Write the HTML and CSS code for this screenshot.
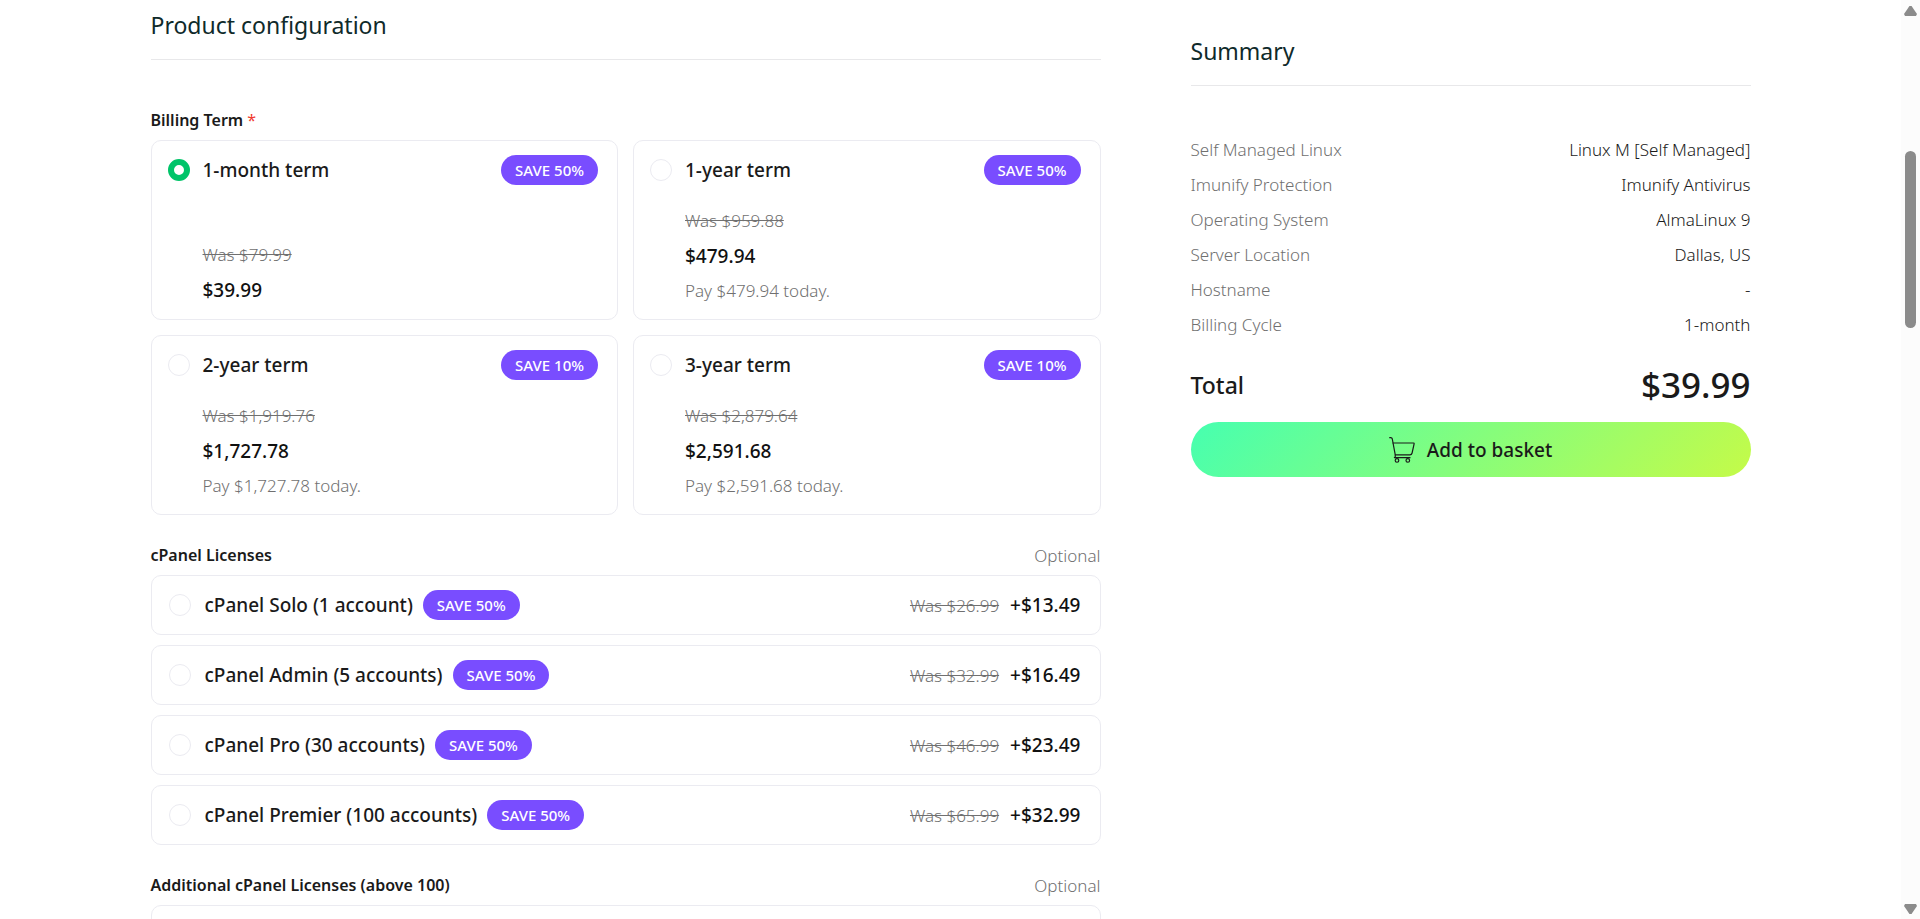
FILE: index.html
```html
<!DOCTYPE html>
<html lang="en">
<head>
  <meta charset="UTF-8" />
  <meta name="viewport" content="width=device-width, initial-scale=1" />
  <title>Product configuration</title>
  <link rel="stylesheet" href="styles.css">
</head>
<body>
  <div class="viewport">
    <main class="page">
      <section class="config">
        <h2 class="section-title">Product configuration</h2>

        <div class="group-head">
          <h3 id="billing-label">Billing Term <span class="required">*</span></h3>
        </div>
        <div class="terms" role="radiogroup" aria-labelledby="billing-label">
          <label class="term">
            <span class="term-head">
              <input type="radio" class="radio" name="term" value="1m" checked>
              <span class="option-name">1-month term</span>
              <span class="badge">SAVE 50%</span>
            </span>
            <span class="term-prices">
              <s class="was">Was $79.99</s>
              <span class="price">$39.99</span>
            </span>
          </label>
          <label class="term">
            <span class="term-head">
              <input type="radio" class="radio" name="term" value="1y">
              <span class="option-name">1-year term</span>
              <span class="badge">SAVE 50%</span>
            </span>
            <span class="term-prices">
              <s class="was">Was $959.88</s>
              <span class="price">$479.94</span>
              <span class="today">Pay $479.94 today.</span>
            </span>
          </label>
          <label class="term">
            <span class="term-head">
              <input type="radio" class="radio" name="term" value="2y">
              <span class="option-name">2-year term</span>
              <span class="badge">SAVE 10%</span>
            </span>
            <span class="term-prices">
              <s class="was">Was $1,919.76</s>
              <span class="price">$1,727.78</span>
              <span class="today">Pay $1,727.78 today.</span>
            </span>
          </label>
          <label class="term">
            <span class="term-head">
              <input type="radio" class="radio" name="term" value="3y">
              <span class="option-name">3-year term</span>
              <span class="badge">SAVE 10%</span>
            </span>
            <span class="term-prices">
              <s class="was">Was $2,879.64</s>
              <span class="price">$2,591.68</span>
              <span class="today">Pay $2,591.68 today.</span>
            </span>
          </label>
        </div>

        <div class="group-head">
          <h3 id="cpanel-label">cPanel Licenses</h3>
          <span class="optional">Optional</span>
        </div>
        <div class="licenses" role="radiogroup" aria-labelledby="cpanel-label">
          <label class="license">
            <input type="radio" class="radio" name="cpanel" value="solo">
            <span class="option-name">cPanel Solo (1 account)</span>
            <span class="badge">SAVE 50%</span>
            <s class="was">Was $26.99</s>
            <span class="price">+$13.49</span>
          </label>
          <label class="license">
            <input type="radio" class="radio" name="cpanel" value="admin">
            <span class="option-name">cPanel Admin (5 accounts)</span>
            <span class="badge">SAVE 50%</span>
            <s class="was">Was $32.99</s>
            <span class="price">+$16.49</span>
          </label>
          <label class="license">
            <input type="radio" class="radio" name="cpanel" value="pro">
            <span class="option-name">cPanel Pro (30 accounts)</span>
            <span class="badge">SAVE 50%</span>
            <s class="was">Was $46.99</s>
            <span class="price">+$23.49</span>
          </label>
          <label class="license">
            <input type="radio" class="radio" name="cpanel" value="premier">
            <span class="option-name">cPanel Premier (100 accounts)</span>
            <span class="badge">SAVE 50%</span>
            <s class="was">Was $65.99</s>
            <span class="price">+$32.99</span>
          </label>
        </div>

        <div class="group-head">
          <h3 id="additional-label">Additional cPanel Licenses (above 100)</h3>
          <span class="optional">Optional</span>
        </div>
        <div class="license"></div>
      </section>

      <aside class="summary">
        <h2 class="section-title">Summary</h2>
        <dl class="summary-list">
          <div class="summary-row"><dt>Self Managed Linux</dt><dd>Linux M [Self Managed]</dd></div>
          <div class="summary-row"><dt>Imunify Protection</dt><dd>Imunify Antivirus</dd></div>
          <div class="summary-row"><dt>Operating System</dt><dd>AlmaLinux 9</dd></div>
          <div class="summary-row"><dt>Server Location</dt><dd>Dallas, US</dd></div>
          <div class="summary-row"><dt>Hostname</dt><dd>-</dd></div>
          <div class="summary-row"><dt>Billing Cycle</dt><dd>1-month</dd></div>
        </dl>
        <div class="total">
          <span class="total-label">Total</span>
          <span class="total-price">$39.99</span>
        </div>
        <button type="button" class="basket">
          <svg class="cart" viewBox="0 0 26 26" fill="none" stroke="currentColor" stroke-width="1.2" stroke-linecap="round" stroke-linejoin="round" aria-hidden="true">
            <path d="M.7.7H1.800c.8 0 1.300.4 1.500 1.300L6.300 18.200c.2 1.200-.2 2.300-.9 2.500H21" />
            <path d="M4.100 6H24.500c.5 0 .7.300.6.800l-2 9.200c-.3 1.300-.9 1.900-2.200 1.900H6.300" />
            <circle cx="8" cy="23.400" r="1.800" />
            <circle cx="18.800" cy="23.400" r="1.800" />
          </svg>
          Add to basket
        </button>
      </aside>
    </main>

    <div class="scrollbar" aria-hidden="true">
      <span class="arrow arrow-up"></span>
      <span class="track"><span class="thumb"></span></span>
      <span class="arrow arrow-down"></span>
    </div>
  </div>
</body>
</html>
```
FILE: styles.css
```css
* {
  margin: 0;
  padding: 0;
  box-sizing: border-box;
}

body {
  font-family: "Segoe UI", "Noto Sans", sans-serif;
  font-size: 17px;
  font-weight: 350;
  line-height: 25px;
  color: #1a1a1a;
  background: #fff;
}

.viewport {
  display: flex;
  height: 100vh;
  overflow: hidden;
}

.page {
  flex: 1;
  display: grid;
  grid-template-columns: 95fr 56fr;
  align-items: start;
  gap: 90px;
  max-width: 1600px;
  margin: 0 auto;
}

.config {
  padding-top: 10px;
}

.summary {
  padding-top: 36px;
}

.section-title {
  padding-bottom: 19px;
  border-bottom: 1px solid #e8e8ea;
  font-size: 23px;
  font-weight: 400;
  line-height: 30px;
  color: #0f2a2a;
}

/* Group headings */
.group-head {
  display: flex;
  justify-content: space-between;
  padding: 28px 0 7px;
}

.section-title + .group-head {
  padding-top: 48px;
}

h3 {
  font-size: 16px;
  font-weight: 600;
}

.required {
  font-weight: 400;
  color: #f03a2e;
}

.optional,
.today,
.was {
  color: #707070;
}

.price {
  font-size: 19px;
  font-weight: 500;
  color: #111;
}

/* Radio */
.radio {
  appearance: none;
  flex: none;
  width: 22px;
  height: 22px;
  border: 1px solid #ebebf1;
  border-radius: 50%;
  background: #fff;
  cursor: pointer;
}

.radio:checked {
  border: 6px solid #00c469;
}

.option-name {
  font-size: 19px;
  font-weight: 500;
}

.badge {
  flex: none;
  padding: 0 14px;
  border-radius: 15px;
  background: #794dff;
  color: #fff;
  font-size: 15px;
  font-weight: 500;
  line-height: 30px;
}

/* Billing terms */
.terms {
  display: grid;
  grid-template-columns: 1fr 1fr;
  gap: 15px;
}

.term {
  display: flex;
  flex-direction: column;
  justify-content: space-between;
  height: 180px;
  padding: 14px 19px 16px 16px;
  border: 1px solid #ebebf1;
  border-radius: 10px;
  cursor: pointer;
}

.term-head {
  display: flex;
  align-items: center;
  gap: 13px;
}

.term-head .badge {
  margin-left: auto;
}

.term-prices {
  display: flex;
  flex-direction: column;
  align-items: flex-start;
  padding-left: 35px;
}

.term-prices .price {
  margin-top: 11px;
}

.term-prices .today {
  margin-top: 9px;
}

/* Licenses */
.licenses {
  display: flex;
  flex-direction: column;
  gap: 10px;
}

.license {
  display: flex;
  align-items: center;
  height: 60px;
  padding: 0 19px 0 17px;
  border: 1px solid #ebebf1;
  border-radius: 10px;
  cursor: pointer;
}

.license .option-name {
  margin: 0 10px 0 14px;
}

.license .was {
  margin: 0 11px 0 auto;
}

/* Summary */
.summary-list {
  padding: 46px 0 18px;
}

.summary-row {
  display: flex;
  justify-content: space-between;
  line-height: 35px;
}

.summary-row dt {
  color: #707070;
}

.total {
  display: flex;
  align-items: center;
  justify-content: space-between;
  font-weight: 500;
  line-height: 50px;
}

.total-label {
  font-size: 23px;
}

.total-price {
  font-size: 35px;
}

.basket {
  display: flex;
  align-items: center;
  justify-content: center;
  gap: 12px;
  width: 100%;
  height: 55px;
  margin-top: 12px;
  border: none;
  border-radius: 28px;
  background: linear-gradient(135deg, #46ffb0 0%, #c5fb48 100%);
  color: #1a1a1a;
  font-family: inherit;
  font-size: 19px;
  font-weight: 500;
  cursor: pointer;
}

.cart {
  width: 26px;
  height: 26px;
}

/* Scrollbar */
.scrollbar {
  flex: none;
  display: flex;
  flex-direction: column;
  align-items: center;
  width: 19px;
  padding: 6px 0 5px;
  background: #fcfcfc;
}

.arrow {
  width: 13px;
  height: 10px;
  background: #8b8b8b;
}

.arrow-up {
  clip-path: polygon(42% 0, 58% 0, 100% 80%, 92% 100%, 8% 100%, 0 80%);
}

.arrow-down {
  clip-path: polygon(42% 100%, 58% 100%, 100% 20%, 92% 0, 8% 0, 0 20%);
}

.track {
  flex: 1;
  padding-top: 135px;
}

.thumb {
  display: block;
  width: 11px;
  height: 177px;
  border-radius: 6px;
  background: #8b8b8b;
}
```
